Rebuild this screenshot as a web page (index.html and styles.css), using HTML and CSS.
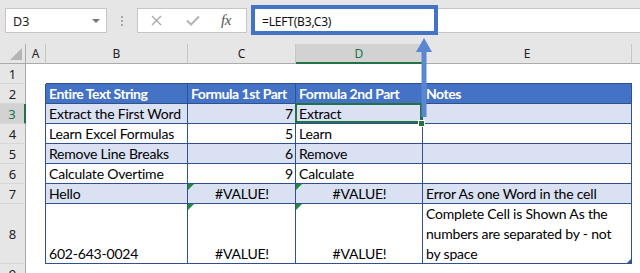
FILE: index.html
```html
<!DOCTYPE html>
<html>
<head>
<meta charset="utf-8">
<link rel="stylesheet" href="styles.css">
</head>
<body>
<div class="app">
  <div class="toolbar">
    <div class="namebox"><span>D3</span><span class="dd"></span></div>
    <div class="grip"><i></i><i></i><i></i></div>
    <div class="fxbox">
      <svg class="ic-x" width="11" height="11" viewBox="0 0 11 11"><path d="M1 1L10 10M10 1L1 10" stroke="#a6a6a6" stroke-width="1.3" fill="none"/></svg>
      <svg class="ic-ok" width="14" height="11" viewBox="0 0 14 11"><path d="M1 5.5L5 9.5L13 1.5" stroke="#b3b3b3" stroke-width="2" fill="none"/></svg>
      <span class="fx">fx</span>
    </div>
    <div class="formula">=LEFT(B3,C3)</div>
  </div>
  <div class="sheet">
    <!-- header -->
    <div class="ch corner"><span class="tri"></span></div>
    <div class="ch">A</div>
    <div class="ch">B</div>
    <div class="ch">C</div>
    <div class="ch sel">D</div>
    <div class="ch">E</div>
    <div class="ch last"></div>
    <!-- row 1 -->
    <div class="rh">1</div>
    <div class="c"></div>
    <div class="c tt"></div>
    <div class="c tt"></div>
    <div class="c tt"></div>
    <div class="c tt"></div>
    <div class="c"></div>
    <!-- row 2 -->
    <div class="rh">2</div>
    <div class="c tl"></div>
    <div class="c t hd">Entire Text String</div>
    <div class="c t hd">Formula 1st Part</div>
    <div class="c t hd">Formula 2nd Part</div>
    <div class="c t hd">Notes</div>
    <div class="c"></div>
    <!-- row 3 -->
    <div class="rh sel">3</div>
    <div class="c tl"></div>
    <div class="c t band">Extract the First Word</div>
    <div class="c t band r">7</div>
    <div class="c t band active">Extract<span class="handle"></span></div>
    <div class="c t band"></div>
    <div class="c"></div>
    <!-- row 4 -->
    <div class="rh">4</div>
    <div class="c tl"></div>
    <div class="c t">Learn Excel Formulas</div>
    <div class="c t r">5</div>
    <div class="c t">Learn</div>
    <div class="c t"></div>
    <div class="c"></div>
    <!-- row 5 -->
    <div class="rh">5</div>
    <div class="c tl"></div>
    <div class="c t band">Remove Line Breaks</div>
    <div class="c t band r">6</div>
    <div class="c t band">Remove</div>
    <div class="c t band"></div>
    <div class="c"></div>
    <!-- row 6 -->
    <div class="rh">6</div>
    <div class="c tl"></div>
    <div class="c t">Calculate Overtime</div>
    <div class="c t r">9</div>
    <div class="c t">Calculate</div>
    <div class="c t"></div>
    <div class="c"></div>
    <!-- row 7 -->
    <div class="rh">7</div>
    <div class="c tl"></div>
    <div class="c t band">Hello</div>
    <div class="c t band ctr err">#VALUE!</div>
    <div class="c t band ctr err">#VALUE!</div>
    <div class="c t band">Error As one Word in the cell</div>
    <div class="c"></div>
    <!-- row 8 -->
    <div class="rh">8</div>
    <div class="c tl"></div>
    <div class="c t">602-643-0024</div>
    <div class="c t ctr err">#VALUE!</div>
    <div class="c t ctr err">#VALUE!</div>
    <div class="c t wrap corner-handle">Complete Cell is Shown As the<br>numbers are separated by - not<br>by space</div>
    <div class="c"></div>
    <!-- row 9 -->
    <div class="rh r9">9</div>
    <div class="c"></div>
    <div class="c"></div>
    <div class="c"></div>
    <div class="c"></div>
    <div class="c"></div>
    <div class="c"></div>
  </div>
  <div class="annot"></div>
  <svg class="arrow" width="20" height="82" viewBox="0 0 20 82">
    <path d="M10 2L18 16H12.5V81H7.5V16H2Z" fill="#5b86d4"/>
  </svg>
</div>
</body>
</html>
```

FILE: styles.css
```css
html, body {
  margin: 0;
  padding: 0;
  background: #fff;
}
.app {
  position: relative;
  width: 640px;
  height: 273px;
  overflow: hidden;
  font-family: "Noto Sans", "Open Sans", sans-serif;
}
.toolbar {
  height: 44px;
  box-sizing: border-box;
  background: #e6e6e6;
  display: flex;
  align-items: flex-start;
  padding: 8px 0 0 5px;
}
.namebox {
  width: 102px;
  height: 25px;
  box-sizing: border-box;
  background: #fff;
  border: 1px solid #c6c6c6;
  display: flex;
  align-items: center;
  justify-content: space-between;
  padding: 1px 6px 0 7px;
  font-size: 12.5px;
  color: #222;
}
.dd {
  width: 0;
  height: 0;
  border-left: 4px solid transparent;
  border-right: 4px solid transparent;
  border-top: 4px solid #777;
}
.grip {
  width: 30px;
  height: 25px;
  display: flex;
  flex-direction: column;
  align-items: center;
  justify-content: center;
  gap: 2px;
}
.grip i {
  width: 2px;
  height: 2px;
  background: #a8a8a8;
}
.fxbox {
  width: 110px;
  height: 25px;
  box-sizing: border-box;
  background: #fff;
  border: 1px solid #c6c6c6;
  display: flex;
  align-items: center;
}
.ic-x { margin-left: 13px; }
.ic-ok { margin-left: 24px; }
.fx {
  margin-left: 21px;
  font-family: "Liberation Serif", serif;
  font-style: italic;
  font-size: 15px;
  color: #555;
  letter-spacing: -0.5px;
}
.formula {
  flex: 1;
  margin-left: 4px;
  height: 25px;
  box-sizing: border-box;
  background: #fff;
  border: 1px solid #c6c6c6;
  border-right: none;
  padding: 2px 0 0 10px;
  font-size: 12px;
  letter-spacing: -0.2px;
  color: #111;
  display: flex;
  align-items: center;
}
.sheet {
  display: grid;
  grid-template-columns: 26px 20px 142px 108px 127px 209px 8px;
  grid-template-rows: 20px repeat(7, 20px) 60px 20px;
  height: 229px;
  overflow: hidden;
  font-family: "Lato", sans-serif;
  font-size: 14px;
  letter-spacing: -0.2px;
}
.ch {
  background: #e6e6e6;
  border-bottom: 1px solid #ababab;
  border-right: 1px solid #c6c6c6;
  box-sizing: border-box;
  font-family: "Noto Sans", sans-serif;
  font-size: 12px;
  letter-spacing: 0;
  color: #222;
  display: flex;
  align-items: center;
  justify-content: center;
}
.ch.last { border-right: none; }
.ch.corner { border-right-color: #ababab; position: relative; }
.tri {
  position: absolute;
  right: 3px;
  bottom: 3px;
  width: 0;
  height: 0;
  border-left: 12px solid transparent;
  border-bottom: 12px solid #b5b5b5;
}
.ch.sel {
  background: #d2d2d2;
  color: #217346;
  border-bottom: 2px solid #217346;
}
.rh {
  background: #e6e6e6;
  border-right: 1px solid #ababab;
  border-bottom: 1px solid #d6d6d6;
  box-sizing: border-box;
  font-family: "Noto Sans", sans-serif;
  font-size: 13px;
  letter-spacing: 0;
  color: #222;
  display: flex;
  align-items: center;
  justify-content: center;
}
.rh.r9 { align-items: flex-start; padding-top: 1px; }
.rh.sel {
  background: #d2d2d2;
  color: #217346;
  border-right: 2px solid #217346;
}
.c {
  box-sizing: border-box;
  display: flex;
  align-items: flex-end;
  padding: 0 2px 0 3px;
  white-space: nowrap;
  line-height: 19px;
  color: #000;
  position: relative;
}
.t {
  border-right: 1px solid #2f528f;
  border-bottom: 1px solid #2f528f;
}
.tl { border-right: 1px solid #2f528f; }
.tt { border-bottom: 1px solid #2f528f; }
.hd {
  background: #4472c4;
  color: #fff;
  font-weight: bold;
  letter-spacing: -0.45px;
}
.band { background: #d9e1f2; }
.r { justify-content: flex-end; }
.ctr { justify-content: center; }
.err::before {
  content: "";
  position: absolute;
  left: 0;
  top: 0;
  width: 0;
  height: 0;
  border-top: 6px solid #1e8a3c;
  border-right: 6px solid transparent;
}
.wrap {
  display: block;
  white-space: nowrap;
  line-height: 20px;
}
.corner-handle::after {
  content: "";
  position: absolute;
  right: 0;
  bottom: 0;
  width: 0;
  height: 0;
  border-left: 4px solid transparent;
  border-bottom: 4px solid #2f528f;
}
.active::after {
  content: "";
  position: absolute;
  left: -1px;
  top: -1px;
  right: 0;
  bottom: 0;
  border: 2px solid #217346;
  pointer-events: none;
}
.handle {
  position: absolute;
  left: 122px;
  top: 16px;
  width: 5px;
  height: 5px;
  background: #217346;
  border: 1px solid #fff;
  z-index: 2;
}
.annot {
  position: absolute;
  left: 251px;
  top: 5px;
  width: 187px;
  height: 30px;
  box-sizing: border-box;
  border: 4px solid #4472c4;
}
.arrow {
  position: absolute;
  left: 414px;
  top: 36px;
}
```
